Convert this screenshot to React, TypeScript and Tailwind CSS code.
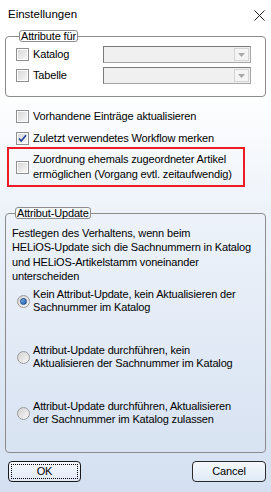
import React from 'react';

const CheckBox = ({ checked = false }: { checked?: boolean }) => (
  <span className="flex h-[13px] w-[13px] shrink-0 items-center justify-center border border-[#8f8f8f] bg-white p-[1px]">
    <span className="flex h-full w-full items-center justify-center bg-gradient-to-br from-[#d8d8d8] to-[#f6f6f6]">
      {checked && (
        <svg viewBox="0 0 9 9" className="h-[9px] w-[9px]">
          <path d="M1 4.5 L3.2 7 L8 1.2" fill="none" stroke="#21409a" strokeWidth="1.6" />
        </svg>
      )}
    </span>
  </span>
);

const Radio = ({ checked = false }: { checked?: boolean }) => (
  <span className="flex h-[13px] w-[13px] shrink-0 items-center justify-center rounded-full border border-[#9a9a9a] bg-gradient-to-br from-[#d2d2d2] to-[#f8f8f8]">
    {checked && (
      <span className="h-[7px] w-[7px] rounded-full border border-[#1c4a8a] bg-gradient-to-br from-[#7fb3e8] to-[#1d5fae]" />
    )}
  </span>
);

const Combo = () => (
  <div className="flex h-[17px] w-[148px] border border-[#a5a5a5] border-t-[#7a7a7a] border-l-[#7a7a7a] bg-[#f0f0f0]">
    <div className="flex-1" />
    <div className="my-[1px] mr-[1px] flex w-[15px] items-center justify-center border border-[#d4d4d4] bg-[#f4f4f4]">
      <svg viewBox="0 0 7 4" className="h-[4px] w-[7px]">
        <path d="M0 0 H7 L3.5 4 Z" fill="#a8a8a8" />
      </svg>
    </div>
  </div>
);

const Legend = ({ children }: { children: React.ReactNode }) => (
  <legend className="ml-[3px] rounded-[3px] border border-[#8c8c8c] bg-white/40 px-[1px] leading-[10px]">
    {children}
  </legend>
);

const options = [
  { checked: true, lines: ['Kein Attribut-Update, kein Aktualisieren der', 'Sachnummer im Katalog'] },
  { checked: false, lines: ['Attribut-Update durchführen, kein', 'Aktualisieren der Sachnummer im Katalog'] },
  { checked: false, lines: ['Attribut-Update durchführen, Aktualisieren', 'der Sachnummer im Katalog zulassen'] },
];

const App = () => {
  return (
    <div className="flex h-[492px] w-[271px] flex-col whitespace-nowrap bg-[linear-gradient(to_bottom,#ffffff_18%,#eef3fa_42%,#d4e0f1_100%)] font-['Liberation_Sans',Arial,sans-serif] text-[11px] tracking-[-0.15px] text-black">
      <div className="flex h-[30px] shrink-0 items-center justify-between pl-[8px] pr-[6px]">
        <span className="text-[11.5px] tracking-normal">Einstellungen</span>
        <svg viewBox="0 0 11 11" className="h-[11px] w-[11px]">
          <path d="M0.5 0.5 L10.5 10.5 M10.5 0.5 L0.5 10.5" stroke="#222" strokeWidth="1" />
        </svg>
      </div>

      <fieldset className="mx-[5px] h-[67px] shrink-0 rounded-[4px] border border-[#8c8c8c] pl-[10px] pr-[14px] pt-[4px]">
        <Legend>Attribute für</Legend>
        <div className="flex flex-col gap-[4px]">
          <div className="flex items-center justify-between">
            <label className="flex items-center gap-[4px]">
              <CheckBox />
              <span>Katalog</span>
            </label>
            <Combo />
          </div>
          <div className="flex items-center justify-between">
            <label className="flex items-center gap-[4px]">
              <CheckBox />
              <span>Tabelle</span>
            </label>
            <Combo />
          </div>
        </div>
      </fieldset>

      <div className="mt-[13px] flex flex-col pl-[16px]">
        <label className="flex h-[12px] items-center gap-[4px]">
          <CheckBox />
          <span>Vorhandene Einträge aktualisieren</span>
        </label>
        <label className="mt-[10px] flex h-[12px] items-center gap-[4px]">
          <CheckBox checked />
          <span>Zuletzt verwendetes Workflow merken</span>
        </label>
      </div>

      <div className="ml-[7px] mt-[3px] flex h-[40px] w-[238px] shrink-0 items-center gap-[4px] border-2 border-[#ed1c24] pl-[7px]">
        <CheckBox />
        <span className="leading-[15px]">
          Zuordnung ehemals zugeordneter Artikel
          <br />
          ermöglichen (Vorgang evtl. zeitaufwendig)
        </span>
      </div>

      <fieldset className="mx-[5px] mt-[20px] h-[246px] shrink-0 rounded-[4px] border border-[#8c8c8c] pl-[6px] pr-[6px] pt-[7px]">
        <Legend>Attribut-Update</Legend>
        <p className="leading-[14.3px]">
          Festlegen des Verhaltens, wenn beim
          <br />
          HELiOS-Update sich die Sachnummern in Katalog
          <br />
          und HELiOS-Artikelstamm voneinander
          <br />
          unterscheiden
        </p>
        <div className="mt-[5px] flex flex-col gap-[30px] pl-[5px]">
          {options.map((o, i) => (
            <label key={i} className="flex items-center gap-[3px]">
              <Radio checked={o.checked} />
              <span className="leading-[13px]">
                {o.lines[0]}
                <br />
                {o.lines[1]}
              </span>
            </label>
          ))}
        </div>
      </fieldset>

      <div className="mt-[8px] flex justify-between pl-[8px] pr-[5px]">
        <button className="flex h-[21px] w-[73px] items-center justify-center rounded-[4px] border border-[#1a1a1a] bg-gradient-to-b from-[#f6f9fd] to-[#dfe9f6] p-[2px]">
          <span className="flex h-full w-full items-center justify-center border border-dotted border-black leading-none">OK</span>
        </button>
        <button className="flex h-[21px] w-[74px] items-center justify-center rounded-[4px] border border-[#2a2a2a] bg-gradient-to-b from-[#f6f9fd] to-[#dfe9f6] leading-none">
          Cancel
        </button>
      </div>
    </div>
  );
};

export default App;
